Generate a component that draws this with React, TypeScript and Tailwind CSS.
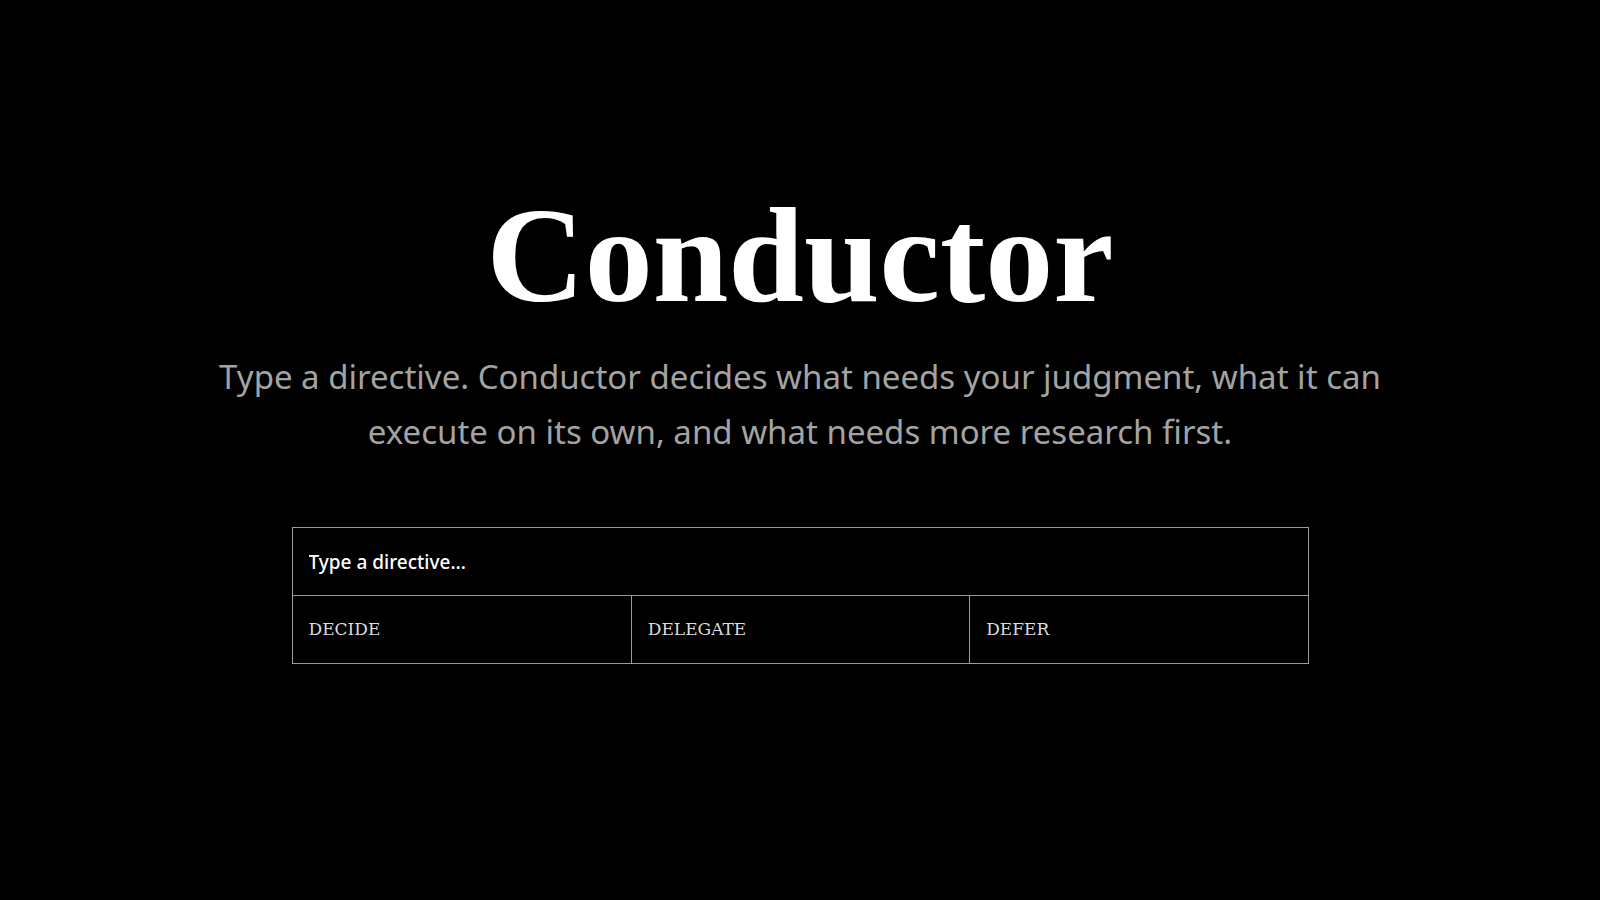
import React, { useState } from 'react';
import clsx from 'clsx';

const modes = ['DECIDE', 'DELEGATE', 'DEFER'];

export default function App() {
  const [directive, setDirective] = useState('');

  return (
    <div className="min-h-screen w-full bg-black flex flex-col items-center pt-[187px]">
      <h1 className="text-white text-[136px] leading-none font-bold tracking-[0px] font-['Liberation_Serif',serif]">
        Conductor
      </h1>
      <p className="mt-[26px] max-w-[1200px] text-center text-[#a3a3a3] text-[33px] leading-[55px] font-['Noto_Sans',sans-serif]">
        Type a directive. Conductor decides what needs your judgment, what it can execute on its own, and what needs more research first.
      </p>

      <div className="mt-[68px] w-[1017px] border border-[#9a9a9a]">
        <input
          value={directive}
          onChange={(e) => setDirective(e.target.value)}
          placeholder="Type a directive..."
          className="block w-full h-[67px] bg-transparent px-[16px] text-[19px] font-medium text-white placeholder:text-white outline-none font-['Noto_Sans',sans-serif]"
        />
        <div className="grid grid-cols-3 border-t border-[#9a9a9a]">
          {modes.map((m, i) => (
            <button
              key={m}
              className={clsx(
                "h-[67px] px-[16px] text-left text-[17px] text-[#dcdcdc] font-['DejaVu_Serif',serif]",
                i > 0 && 'border-l border-[#9a9a9a]'
              )}
            >
              {m}
            </button>
          ))}
        </div>
      </div>
    </div>
  );
}
